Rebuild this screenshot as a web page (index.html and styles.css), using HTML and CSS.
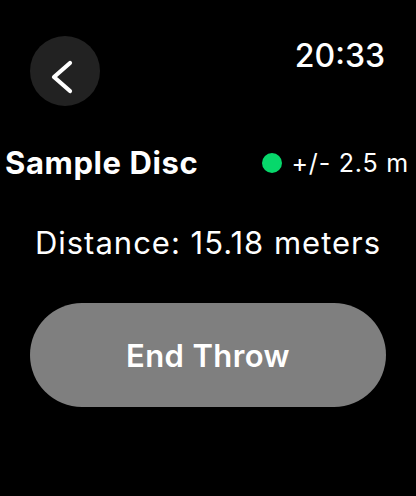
FILE: index.html
```html
<!DOCTYPE html>
<html>
<head>
<meta charset="utf-8">
<link rel="stylesheet" href="styles.css">
</head>
<body>
<div class="screen">
  <div class="top">
    <div class="back">
      <svg width="70" height="70" viewBox="0 0 70 70"><path d="M40 27 L24 41 L40 55" fill="none" stroke="#fff" stroke-width="4.2" stroke-linecap="round" stroke-linejoin="round"/></svg>
    </div>
    <div class="time">20:33</div>
  </div>
  <div class="row">
    <div class="title">Sample Disc</div>
    <div class="acc"><span class="dot"></span><span class="acc-text">+/- 2.5 m</span></div>
  </div>
  <div class="distance">Distance: 15.18 meters</div>
  <div class="btn">End Throw</div>
</div>
</body>
</html>
```
FILE: styles.css
```css
html, body {
  margin: 0;
  padding: 0;
  background: #000;
}
.screen {
  width: 416px;
  height: 496px;
  background: #000;
  color: #fff;
  font-family: Inter, "Noto Sans", sans-serif;
  display: flex;
  flex-direction: column;
}
.top {
  display: flex;
  justify-content: space-between;
  align-items: flex-start;
  padding: 36px 31px 0 30px;
}
.back {
  width: 70px;
  height: 70px;
  border-radius: 50%;
  background: #222222;
}
.back svg { display: block; }
.time {
  font-size: 32px;
  font-weight: 500;
  line-height: 32px;
  margin-top: 4px;
}
.row {
  display: flex;
  justify-content: space-between;
  align-items: center;
  padding: 0 7px 0 5px;
  margin-top: 40px;
  height: 34px;
}
.title {
  font-size: 31px;
  font-weight: 700;
  line-height: 34px;
  letter-spacing: 0.6px;
}
.acc {
  display: flex;
  align-items: center;
  gap: 9px;
}
.dot {
  width: 20px;
  height: 20px;
  border-radius: 50%;
  background: #07d86b;
}
.acc-text {
  font-size: 25px;
  line-height: 30px;
  letter-spacing: 0.8px;
}
.distance {
  text-align: center;
  font-size: 31px;
  line-height: 34px;
  letter-spacing: 1px;
  margin-top: 46px;
}
.btn {
  margin: 43px 30px 0 30px;
  height: 104px;
  border-radius: 52px;
  background: #7f7f7f;
  display: flex;
  align-items: center;
  justify-content: center;
  font-size: 31px;
  font-weight: 600;
  letter-spacing: 0.4px;
}
```
